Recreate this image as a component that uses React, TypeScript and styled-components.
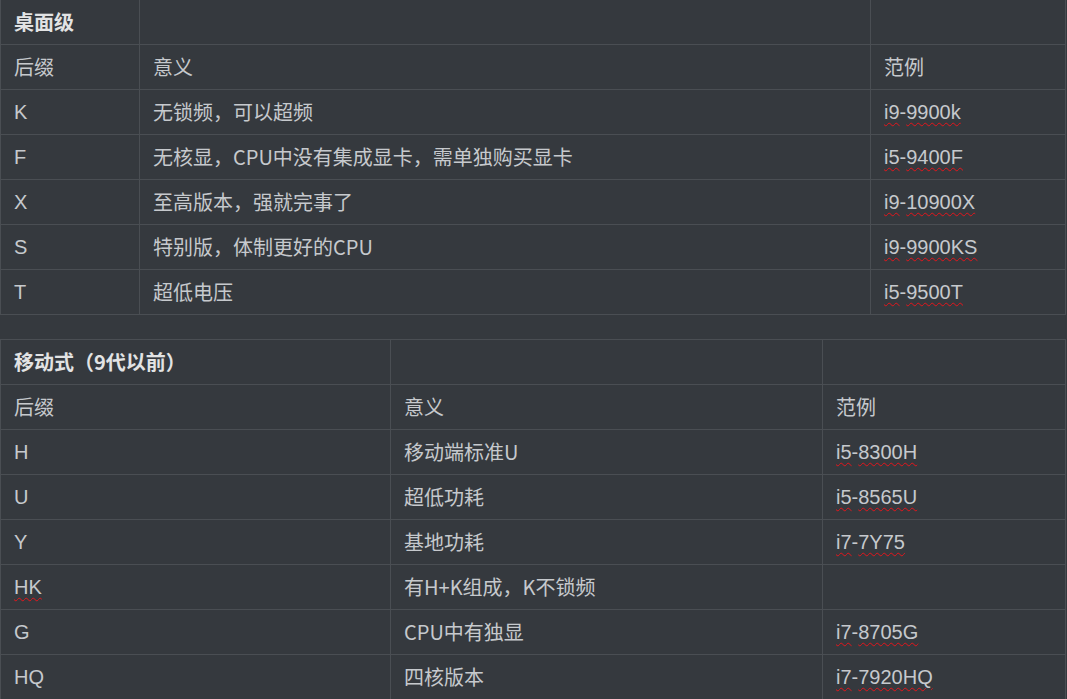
import React from "react";
import styled, { createGlobalStyle } from "styled-components";

type Row = { suffix: string; flagged?: boolean; meaning: string; example?: string };

const desktopRows: Row[] = [
	{ suffix: "K", meaning: "无锁频，可以超频", example: "i9-9900k" },
	{ suffix: "F", meaning: "无核显，CPU中没有集成显卡，需单独购买显卡", example: "i5-9400F" },
	{ suffix: "X", meaning: "至高版本，强就完事了", example: "i9-10900X" },
	{ suffix: "S", meaning: "特别版，体制更好的CPU", example: "i9-9900KS" },
	{ suffix: "T", meaning: "超低电压", example: "i5-9500T" },
];

const mobileRows: Row[] = [
	{ suffix: "H", meaning: "移动端标准U", example: "i5-8300H" },
	{ suffix: "U", meaning: "超低功耗", example: "i5-8565U" },
	{ suffix: "Y", meaning: "基地功耗", example: "i7-7Y75" },
	{ suffix: "HK", flagged: true, meaning: "有H+K组成，K不锁频" },
	{ suffix: "G", meaning: "CPU中有独显", example: "i7-8705G" },
	{ suffix: "HQ", meaning: "四核版本", example: "i7-7920HQ" },
];

// spell-check squiggles sit under each word, not under the hyphen
const renderExample = (code?: string) => {
	if (!code) return null;
	const [head, tail] = code.split("-");
	return (
		<>
			<Misspelled>{head}</Misspelled>-<Misspelled>{tail}</Misspelled>
		</>
	);
};

const SuffixTable = ({ title, columns, rows }: { title: string; columns: string; rows: Row[] }) => (
	<Grid $columns={columns}>
		<HeadCell>{title}</HeadCell>
		<HeadCell />
		<HeadCell />

		<Cell $cjk>后缀</Cell>
		<Cell $cjk>意义</Cell>
		<Cell $cjk>范例</Cell>

		{rows.map((row, i) => (
			<React.Fragment key={i}>
				<Cell>{row.flagged ? <Misspelled>{row.suffix}</Misspelled> : row.suffix}</Cell>
				<Cell $cjk>{row.meaning}</Cell>
				<Cell>{renderExample(row.example)}</Cell>
			</React.Fragment>
		))}
	</Grid>
);

const App = () => {
	return (
		<>
			<GlobalStyle />
			<Page>
				<SuffixTable title="桌面级" columns="139px 731px 195px" rows={desktopRows} />
				<SuffixTable title="移动式（9代以前）" columns="390px 432px 243px" rows={mobileRows} />
			</Page>
		</>
	);
};

export default App;

const GlobalStyle = createGlobalStyle`
	html, body {
		margin: 0;
		padding: 0;
		background: #35393e;
	}
`;

const Page = styled.div`
	width: 1067px;
	margin-top: -1px;

	display: flex;
	flex-direction: column;
	gap: 24px;

	font-family: "Liberation Sans", Arial, "Noto Sans CJK SC", sans-serif;
	font-size: 20px;
	color: #c6c9cd;
`;

const Grid = styled.div<{ $columns: string }>`
	width: 1066px;
	box-sizing: border-box;

	display: grid;
	grid-template-columns: ${(p) => p.$columns};

	border-top: 1px solid #4a4e53;
	border-left: 1px solid #4a4e53;
`;

const Cell = styled.div<{ $cjk?: boolean }>`
	height: 45px;
	box-sizing: border-box;
	padding: 0 13px;

	display: flex;
	align-items: center;
	white-space: nowrap;

	border-right: 1px solid #4a4e53;
	border-bottom: 1px solid #4a4e53;

	font-family: ${(p) =>
		p.$cjk ? `"Noto Sans CJK SC", "Liberation Sans", sans-serif` : `"Liberation Sans", Arial, "Noto Sans CJK SC", sans-serif`};
	line-height: 1.2;
`;

const HeadCell = styled(Cell)`
	font-family: "Noto Sans CJK SC", "Liberation Sans", sans-serif;
	font-weight: 700;
	color: #e2e3e4;
`;

const Misspelled = styled.span`
	text-decoration: underline wavy #e5151b;
	text-decoration-thickness: 1px;
	text-underline-offset: 3px;
`;
